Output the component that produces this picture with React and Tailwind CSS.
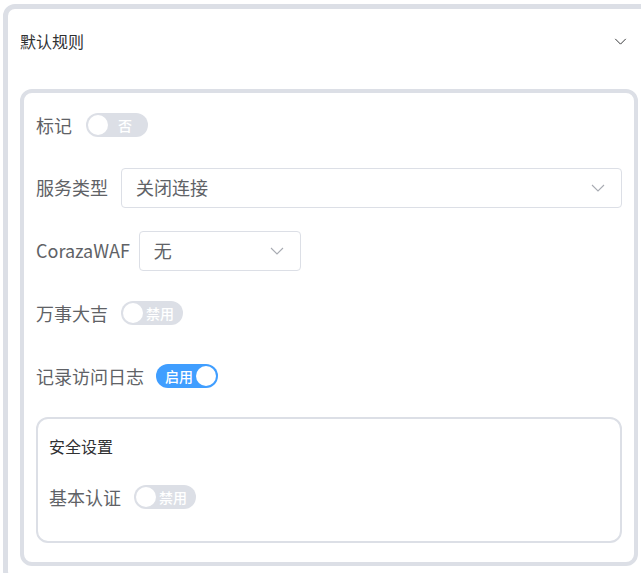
import React from 'react'

const font = { fontFamily: '"Noto Sans CJK SC", "Noto Sans", sans-serif' }

function Chevron({ className }) {
  return (
    <svg viewBox="0 0 14 8" className={className} fill="none" stroke="currentColor" strokeWidth="1.1">
      <path d="M1 1l6 6 6-6" />
    </svg>
  )
}

function Switch({ on, text }) {
  return (
    <div
      className={`relative h-6 w-[62px] rounded-full flex items-center shrink-0 ${
        on ? 'bg-[#409eff] pl-[8px] pr-[24px]' : 'bg-[#dcdfe6] pl-[24px] pr-[8px]'
      }`}
    >
      <span className="flex-1 text-center text-[14px] font-medium text-white leading-none">{text}</span>
      <span
        className={`absolute top-[2px] h-5 w-5 rounded-full bg-white ${on ? 'right-[2px]' : 'left-[2px]'}`}
      />
    </div>
  )
}

function Select({ value, className }) {
  return (
    <div
      className={`h-10 flex items-center justify-between border border-[#dcdfe6] rounded-[4px] bg-white pl-[14px] pr-[16px] ${className}`}
    >
      <span className="text-[18px] text-[#606266]">{value}</span>
      <Chevron className="w-[14px] h-[8px] text-[#a8abb2]" />
    </div>
  )
}

function Row({ label, children, gap = 'mr-[13px]' }) {
  return (
    <div className="h-10 flex items-center">
      <span className={`text-[18px] text-[#606266] whitespace-nowrap ${gap}`}>{label}</span>
      {children}
    </div>
  )
}

export default function App() {
  return (
    <div className="h-screen w-screen overflow-hidden bg-white" style={font}>
      <div className="ml-[3px] mt-[4px] w-[652px] border-[5px] border-[#dcdfe6] rounded-[12px] bg-white">
        {/* header */}
        <div className="h-16 flex items-center justify-between pl-3 pr-[23px]">
          <span className="text-[16px] text-[#303133]">默认规则</span>
          <Chevron className="w-[13px] h-[7px] text-[#303133]" />
        </div>

        {/* body */}
        <div className="px-3 pt-4 pb-3">
          <div className="border-4 border-[#dcdfe6] rounded-[12px] px-3 pt-3 pb-[19px]">
            <div className="flex flex-col gap-[22.75px]">
              <Row label="标记" gap="mr-[14px]">
                <Switch on={false} text="否" />
              </Row>
              <Row label="服务类型">
                <Select value="关闭连接" className="flex-1" />
              </Row>
              <Row label="CorazaWAF" gap="mr-[9px]">
                <Select value="无" className="w-[162px]" />
              </Row>
              <Row label="万事大吉">
                <Switch on={false} text="禁用" />
              </Row>
              <Row label="记录访问日志" gap="mr-[12px]">
                <Switch on text="启用" />
              </Row>
            </div>

            {/* security */}
            <div className="mt-[21px] h-[126px] border-2 border-[#dcdfe6] rounded-[12px] pl-[11px] pt-[14px]">
              <div className="h-[26px] flex items-center text-[16px] text-[#303133]">安全设置</div>
              <div className="mt-[18px]">
                <Row label="基本认证" gap="mr-[13px]">
                  <Switch on={false} text="禁用" />
                </Row>
              </div>
            </div>
          </div>
        </div>
      </div>
    </div>
  )
}
